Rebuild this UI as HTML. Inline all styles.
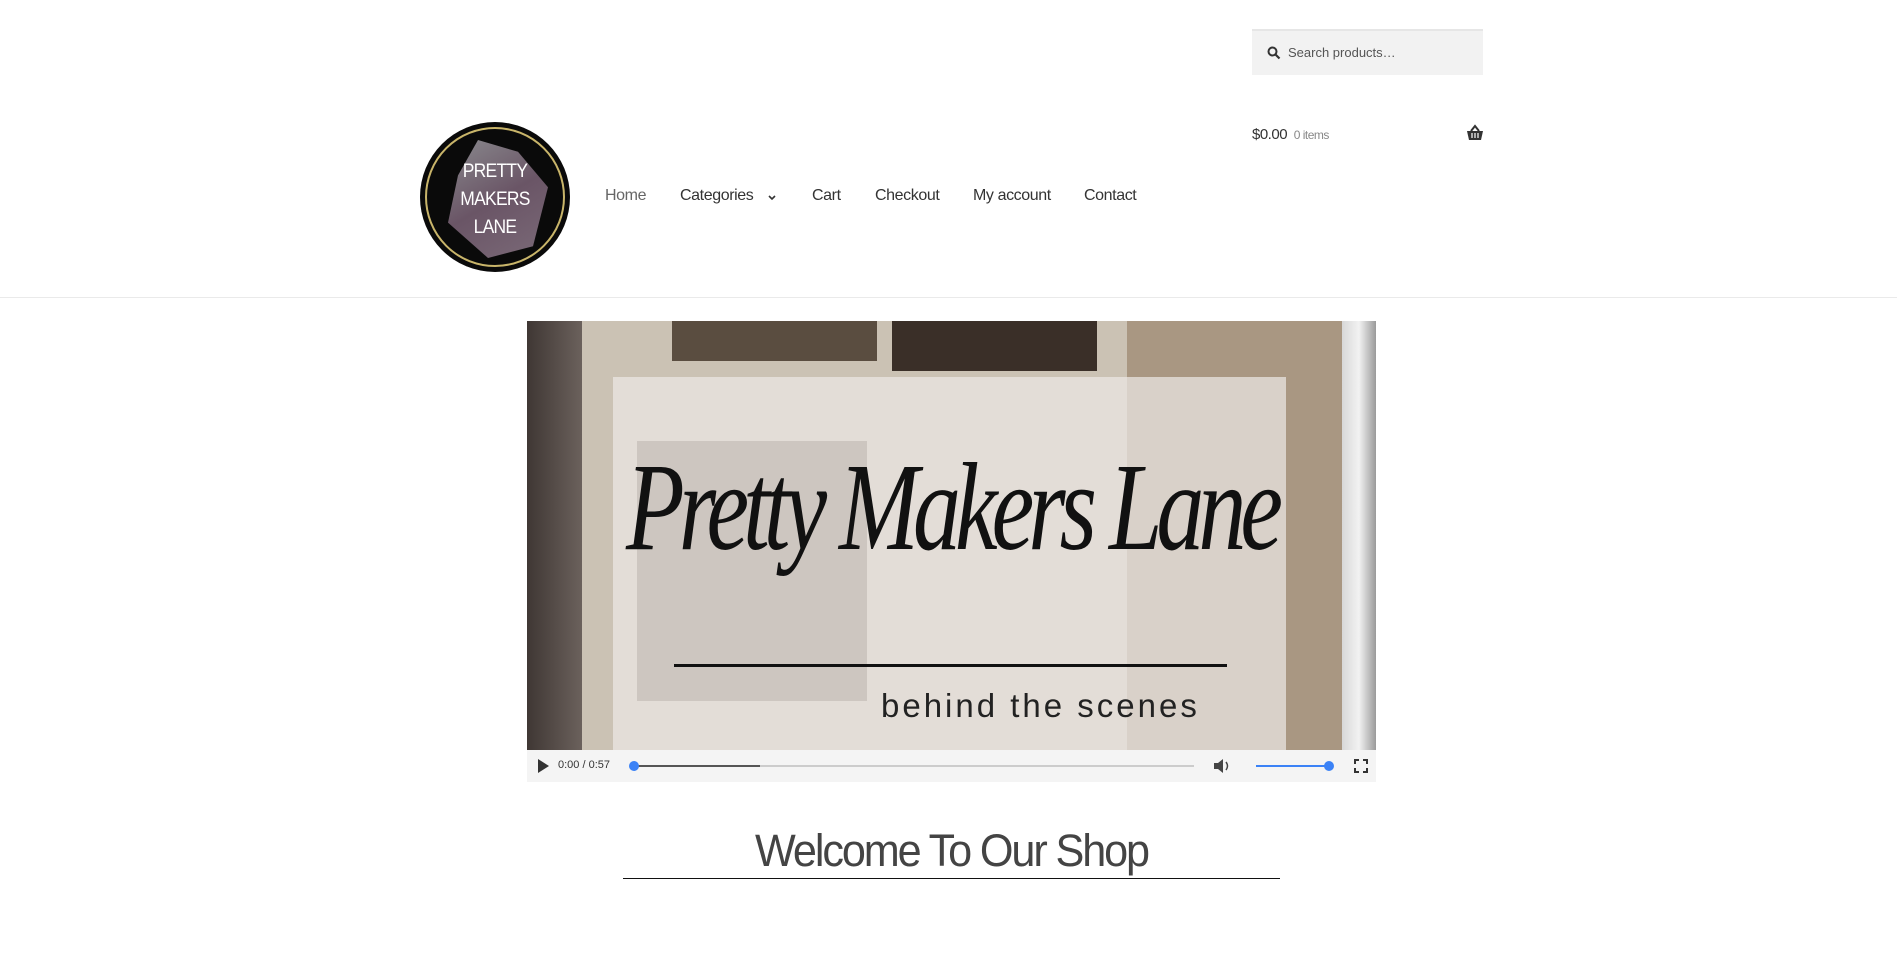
<!DOCTYPE html>
<html><head><meta charset="utf-8"><style>
*{margin:0;padding:0;box-sizing:border-box}
body{width:1897px;height:954px;background:#fff;font-family:"Liberation Sans",sans-serif;position:relative;overflow:hidden;color:#333}
.abs{position:absolute}
.search{left:1252px;top:29px;width:231px;height:46px;background:#f2f2f2;border-top:2px solid #e6e6e6}
.search span{position:absolute;left:36px;top:14px;font-size:13px;color:#555}
.nav a{position:absolute;top:187px;font-size:16px;color:#333;text-decoration:none;letter-spacing:-0.4px}
.hr{left:0;top:297px;width:1897px;height:1px;background:#eaeaea}
.video{left:527px;top:321px;width:849px;height:429px;overflow:hidden;background:#cbc2b4}
.ctrl{left:527px;top:750px;width:849px;height:32px;background:#f4f4f4}
</style></head><body>
<div class="abs search"><svg class="abs" style="left:15px;top:15px" width="14" height="14" viewBox="0 0 14 14"><circle cx="5.5" cy="5.5" r="4" fill="none" stroke="#333" stroke-width="2"/><path d="M8.5 8.5L12.5 12.5" stroke="#333" stroke-width="2.2"/></svg><span>Search products…</span></div>
<div class="abs" style="left:1252px;top:126px;font-size:15px;color:#333;letter-spacing:-0.5px">$0.00 <span style="font-size:12px;color:#888;margin-left:3px">0 items</span></div>
<svg class="abs" style="left:1466px;top:124px" width="18" height="18" viewBox="0 0 18 18"><path d="M1 7h16l-2 9H3z" fill="#333"/><path d="M5 7l4-5 4 5" fill="none" stroke="#333" stroke-width="2"/><path d="M6 9v5M9 9v5M12 9v5" stroke="#fff" stroke-width="1.2"/></svg>
<div class="abs" style="left:420px;top:122px;width:150px;height:150px;border-radius:50%;background:#0a0a0a;"></div>
<div class="abs" style="left:425px;top:127px;width:140px;height:140px;border-radius:50%;border:2px solid #c9b56a;"></div>
<div class="abs" style="left:448px;top:140px;width:100px;height:118px;background:linear-gradient(150deg,#8a8a8e,#6a5566 50%,#7b6a78);clip-path:polygon(30% 0,70% 10%,100% 40%,85% 90%,40% 100%,0 70%,10% 30%)"></div>
<div class="abs" style="left:420px;top:158px;width:150px;text-align:center;color:#fff;font-size:19px;line-height:28px;letter-spacing:-0.8px;transform:scaleX(0.92)">PRETTY<br>MAKERS<br>LANE</div>
<div class="nav">
<a style="left:605px;color:#666">Home</a>
<a style="left:680px">Categories</a>
<svg class="abs" style="left:767px;top:194px" width="10" height="8" viewBox="0 0 10 8"><path d="M2 2l3 3 3-3" fill="none" stroke="#333" stroke-width="1.6"/></svg>
<a style="left:812px">Cart</a>
<a style="left:875px">Checkout</a>
<a style="left:973px">My account</a>
<a style="left:1084px">Contact</a>
</div>
<div class="abs hr"></div>
<div class="abs video">
<div class="abs" style="left:0;top:0;width:55px;height:429px;background:linear-gradient(90deg,#3f3734,#6b615c)"></div>
<div class="abs" style="left:600px;top:0;width:215px;height:429px;background:#a99782"></div>
<div class="abs" style="left:815px;top:0;width:34px;height:429px;background:linear-gradient(90deg,#d8d8d8,#f2f2f2,#9a9a9a)"></div>
<div class="abs" style="left:145px;top:0;width:205px;height:40px;background:#5a4d40"></div>
<div class="abs" style="left:365px;top:0;width:205px;height:50px;background:#3a2f28"></div>
<div class="abs" style="left:86px;top:56px;width:673px;height:373px;background:rgba(235,232,228,0.72)"></div>
<div class="abs" style="left:110px;top:120px;width:230px;height:260px;background:rgba(80,70,60,0.15)"></div>
<div class="abs" style="left:0;top:130px;width:849px;text-align:center;font-family:'Liberation Serif',serif;font-style:italic;font-size:96px;color:#111;letter-spacing:-6px;transform:scaleY(1.3)">Pretty Makers Lane</div>
<div class="abs" style="left:147px;top:343px;width:553px;height:3px;background:#111"></div>
<div class="abs" style="left:354px;top:366px;font-size:33px;color:#222;letter-spacing:3px">behind the scenes</div>
</div>
<div class="abs ctrl">
<svg class="abs" style="left:10px;top:9px" width="12" height="14"><path d="M1 0L12 7L1 14z" fill="#333"/></svg>
<div class="abs" style="left:31px;top:9px;font-size:11px;color:#333">0:00 / 0:57</div>
<div class="abs" style="left:106px;top:15px;width:561px;height:2px;background:#ccc"></div>
<div class="abs" style="left:106px;top:15px;width:127px;height:2px;background:#555"></div>
<div class="abs" style="left:102px;top:11px;width:10px;height:10px;border-radius:50%;background:#3b82f6"></div>
<svg class="abs" style="left:686px;top:7px" width="20" height="18"><path d="M1 6h4l5-4v14l-5-4H1z" fill="#444"/><path d="M13 5q3 4 0 8" fill="none" stroke="#444" stroke-width="1.5"/></svg>
<div class="abs" style="left:729px;top:15px;width:72px;height:2px;background:#3b82f6"></div>
<div class="abs" style="left:797px;top:11px;width:10px;height:10px;border-radius:50%;background:#3b82f6"></div>
<svg class="abs" style="left:827px;top:9px" width="14" height="14"><path d="M1 5V1h4M9 1h4v4M13 9v4H9M5 13H1V9" fill="none" stroke="#333" stroke-width="2"/></svg>
</div>
<div class="abs" style="left:0;top:825px;width:1903px;text-align:center;font-size:45px;color:#444;letter-spacing:-2.2px;transform:scaleX(0.96)">Welcome To Our Shop</div>
<div class="abs" style="left:623px;top:878px;width:657px;height:1px;background:#111"></div>
</body></html>
